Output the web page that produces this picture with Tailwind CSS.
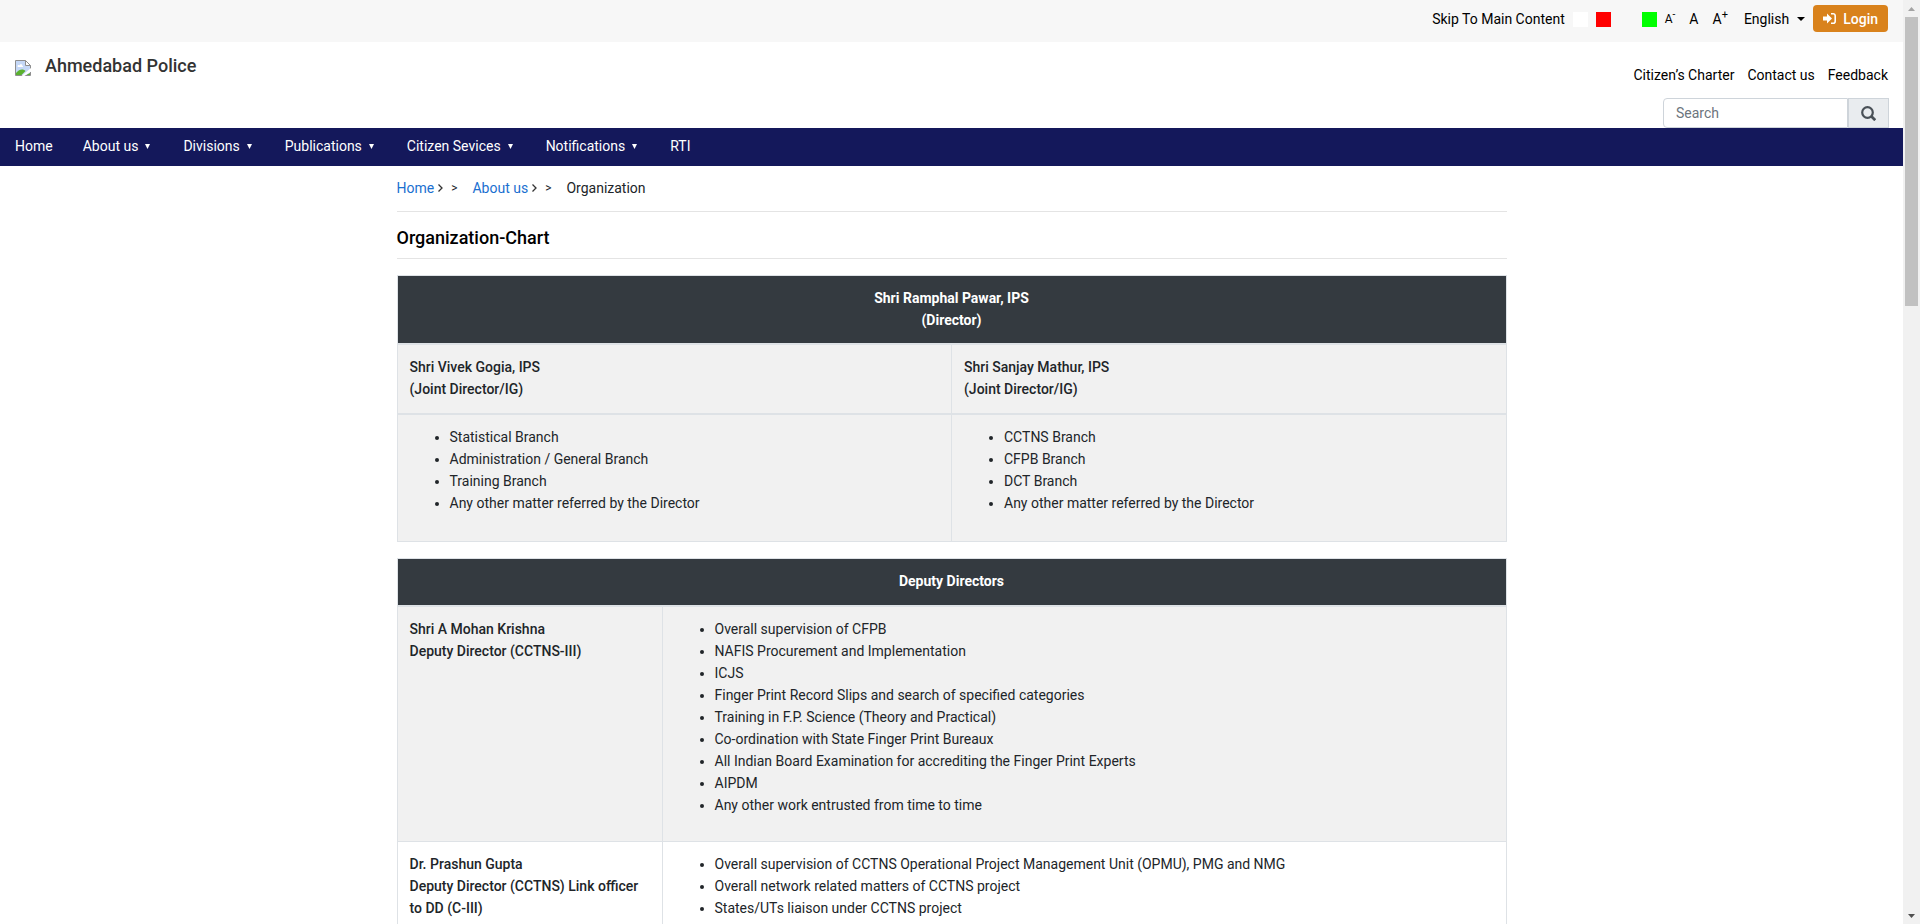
<!DOCTYPE html>
<html lang="en">
<head>
<meta charset="utf-8">
<meta name="viewport" content="width=device-width, initial-scale=1">
<title>Ahmedabad Police</title>
<script src="https://cdn.jsdelivr.net/npm/@tailwindcss/browser@4"></script>
</head>
<body class="flex h-screen overflow-hidden bg-white font-['Roboto',sans-serif] text-[14px] leading-[22px] text-[#212529]">
<div class="min-w-0 flex-1 overflow-hidden">
  <div class="flex h-[42px] items-center justify-end bg-[#f7f7f7] pr-[15px] pb-[5px] text-black">
    <a href="#main" class="mr-2">Skip To Main Content</a>
    <div class="mr-2 flex gap-2 pt-[2px]">
      <button aria-label="White theme" class="size-[15px] bg-white"></button>
      <button aria-label="Red theme" class="size-[15px] bg-[#ff0000]"></button>
      <button aria-label="Default theme" class="size-[15px] bg-[#f7f7f7]"></button>
      <button aria-label="Green theme" class="size-[15px] bg-[#00ff00]"></button>
    </div>
    <button aria-label="Smaller text" class="mr-[14px] text-[12px]">A<sup class="text-[10px]">-</sup></button>
    <button aria-label="Normal text" class="mr-[14px]">A</button>
    <button aria-label="Larger text" class="mr-4">A<sup class="text-[11px]">+</sup></button>
    <button class="mr-2 flex items-center gap-2">English
      <svg class="h-1 w-2" viewBox="0 0 8 4" fill="currentColor" aria-hidden="true"><path d="M0 0h8L4 4z"/></svg>
    </button>
    <button class="flex h-[27px] items-center gap-[7px] rounded-[4px] bg-[#d9821c] px-[10px] font-medium text-white">
      <svg class="h-[11px] w-[13px]" viewBox="0 0 13 11" aria-hidden="true"><path fill="currentColor" d="M0 3.500h4V.5l5 5-5 5v-3H0z"/><path fill="none" stroke="currentColor" stroke-width="1.600" d="M8 .8h2.200a2 2 0 0 1 2 2v5.400a2 2 0 0 1-2 2H8"/></svg>
      Login
    </button>
  </div>

  <header class="flex h-[86px] justify-between pr-[14px] pl-[15px]">
    <div class="flex items-start gap-[14px] pt-3">
      <svg class="mt-[6px] size-4" viewBox="0 0 16 16" role="img" aria-label="Logo">
        <path fill="#c5d8f7" d="M.5.5h10l5 5v10H.5z"/>
        <path fill="#fff" d="M2.500 6.500c-.3-1.500 1.600-2 2-1 .3-1.800 3-1.500 2.800.2 1.200 0 1.200 1.300.2 1.300H3.200z"/>
        <path fill="#5bb12f" d="M1 15v-2c2-2.500 4-3.500 6-3.500 1.500 0 2.500.5 3.500 1.500L6.500 15z"/>
        <path fill="#5bb12f" d="M11 15l4-2v2z"/>
        <path fill="#fff" d="M10.500.5v5h5z"/>
        <path fill="none" stroke="#8e8e8e" d="M15.500 9V5.500l-5-5H.5v15h15V12M10.500.5v5h5"/>
        <path fill="#fff" d="M16 8v3.500L9.500 16H6.500z"/>
      </svg>
      <h1 class="text-[18px] leading-6 font-medium text-[#333]">Ahmedabad Police</h1>
    </div>
    <div class="flex flex-col items-end justify-between pt-[22px] text-black">
      <div class="flex gap-[13px] pr-px"><a href="#">Citizen’s Charter</a><a href="#">Contact us</a><a href="#">Feedback</a></div>
      <form class="flex h-[30px]">
        <input type="search" aria-label="Search" placeholder="Search" class="w-[185px] rounded-l-[4px] border border-[#ced4da] px-3 text-[14px] placeholder:text-[#6c757d]">
        <button type="button" aria-label="Submit search" class="flex w-[41px] items-center justify-center border border-[#ced4da] bg-[#e9ecef] text-[#495057]">
          <svg class="size-[15px]" viewBox="0 0 15 15" fill="none" stroke="currentColor" stroke-width="2.200" aria-hidden="true"><circle cx="6.500" cy="6.500" r="5.300"/><path stroke-width="2.700" d="M10.300 10.300l3.900 3.900"/></svg>
        </button>
      </form>
    </div>
  </header>

  <nav class="flex h-[38px] items-center gap-[30px] bg-[#14185b] px-[15px] pb-[2px] text-white">
    <a href="#">Home</a>
    <a href="#" class="flex items-center gap-[7px] pr-[3px]">About us <svg class="h-[5px] w-[5px]" viewBox="0 0 5 5" fill="currentColor" aria-hidden="true"><path d="M0 0h5L2.500 5z"/></svg></a>
    <a href="#" class="flex items-center gap-[7px] pr-[3px]">Divisions <svg class="h-[5px] w-[5px]" viewBox="0 0 5 5" fill="currentColor" aria-hidden="true"><path d="M0 0h5L2.500 5z"/></svg></a>
    <a href="#" class="flex items-center gap-[7px] pr-[3px]">Publications <svg class="h-[5px] w-[5px]" viewBox="0 0 5 5" fill="currentColor" aria-hidden="true"><path d="M0 0h5L2.500 5z"/></svg></a>
    <a href="#" class="flex items-center gap-[7px] pr-[3px]">Citizen Sevices <svg class="h-[5px] w-[5px]" viewBox="0 0 5 5" fill="currentColor" aria-hidden="true"><path d="M0 0h5L2.500 5z"/></svg></a>
    <a href="#" class="flex items-center gap-[7px] pr-[3px]">Notifications <svg class="h-[5px] w-[5px]" viewBox="0 0 5 5" fill="currentColor" aria-hidden="true"><path d="M0 0h5L2.500 5z"/></svg></a>
    <a href="#">RTI</a>
  </nav>

  <main id="main" class="mx-auto w-full max-w-[1110px]">
    <nav aria-label="Breadcrumb" class="flex items-center border-b border-[#e4e4e4] pt-[11px] pb-3">
      <a href="#" class="text-[#1a6fd0]">Home</a>
      <svg class="ml-1 h-2 w-[5px]" viewBox="0 0 5 8" fill="none" stroke="#333" stroke-width="1.300" aria-hidden="true"><path d="M.5.5L4 4 .5 7.500"/></svg>
      <span class="mr-[15px] ml-2 text-[12px]">&gt;</span>
      <a href="#" class="text-[#1a6fd0]">About us</a>
      <svg class="ml-1 h-2 w-[5px]" viewBox="0 0 5 8" fill="none" stroke="#333" stroke-width="1.300" aria-hidden="true"><path d="M.5.5L4 4 .5 7.500"/></svg>
      <span class="mr-[15px] ml-2 text-[12px]">&gt;</span>
      <span>Organization</span>
    </nav>
    <h2 class="border-b border-[#e4e4e4] pt-[14px] pb-2 text-[18px] leading-6 font-medium text-black">Organization-Chart</h2>

    <table class="mt-4 w-full table-fixed border-collapse border border-[#dee2e6]">
      <thead>
        <tr class="border-b-2 border-[#dee2e6] bg-[#343a40] text-white"><th colspan="2" class="px-3 pt-[11px] pb-3 font-bold">Shri Ramphal Pawar, IPS<br>(Director)</th></tr>
      </thead>
      <tbody class="bg-[#f1f1f1]">
        <tr class="border-b-2 border-[#dee2e6] text-left">
          <th class="border-r border-[#dee2e6] px-3 pt-[11px] pb-[13px] font-medium">Shri Vivek Gogia, IPS<br>(Joint Director/IG)</th>
          <th class="px-3 pt-[11px] pb-[13px] font-medium">Shri Sanjay Mathur, IPS<br>(Joint Director/IG)</th>
        </tr>
        <tr class="align-top">
          <td class="border-r border-[#dee2e6] px-3 pt-[11px] pb-[27px]"><ul class="list-disc pl-10"><li>Statistical Branch</li><li>Administration / General Branch</li><li>Training Branch</li><li>Any other matter referred by the Director</li></ul></td>
          <td class="px-3 pt-[11px] pb-[27px]"><ul class="list-disc pl-10"><li>CCTNS Branch</li><li>CFPB Branch</li><li>DCT Branch</li><li>Any other matter referred by the Director</li></ul></td>
        </tr>
      </tbody>
    </table>

    <table class="mt-4 w-full table-fixed border-collapse border border-[#dee2e6]">
      <colgroup><col class="w-[265px]"><col></colgroup>
      <thead>
        <tr class="border-b-2 border-[#dee2e6] bg-[#343a40] text-white"><th colspan="2" class="px-3 pt-[11px] pb-[13px] font-bold">Deputy Directors</th></tr>
      </thead>
      <tbody>
        <tr class="border-b border-[#dee2e6] bg-[#f1f1f1] align-top">
          <th class="border-r border-[#dee2e6] px-3 pt-[11px] text-left font-medium">Shri A Mohan Krishna<br>Deputy Director (CCTNS-III)</th>
          <td class="px-3 pt-[11px] pb-[25px]"><ul class="list-disc pl-10"><li>Overall supervision of CFPB</li><li>NAFIS Procurement and Implementation</li><li>ICJS</li><li>Finger Print Record Slips and search of specified categories</li><li>Training in F.P. Science (Theory and Practical)</li><li>Co-ordination with State Finger Print Bureaux</li><li>All Indian Board Examination for accrediting the Finger Print Experts</li><li>AIPDM</li><li>Any other work entrusted from time to time</li></ul></td>
        </tr>
        <tr class="align-top">
          <th class="border-r border-[#dee2e6] px-3 pt-[11px] text-left font-medium">Dr. Prashun Gupta<br>Deputy Director (CCTNS) Link officer to DD (C-III)</th>
          <td class="px-3 pt-[11px] pb-[25px]"><ul class="list-disc pl-10"><li>Overall supervision of CCTNS Operational Project Management Unit (OPMU), PMG and NMG</li><li>Overall network related matters of CCTNS project</li><li>States/UTs liaison under CCTNS project</li><li>Hiring of staff under CCTNS project</li></ul></td>
        </tr>
      </tbody>
    </table>
  </main>
</div>

<div class="flex w-[17px] shrink-0 flex-col items-center bg-[#f1f1f1]" aria-hidden="true">
  <svg class="size-[17px] shrink-0" viewBox="0 0 17 17" fill="#a3a3a3"><path d="M5 11h7L8.500 7z"/></svg>
  <div class="h-[289px] w-[13px] bg-[#c1c1c1]"></div>
  <svg class="mt-auto size-[17px] shrink-0" viewBox="0 0 17 17" fill="#505050"><path d="M5 7h7l-3.500 4z"/></svg>
</div>
</body>
</html>
